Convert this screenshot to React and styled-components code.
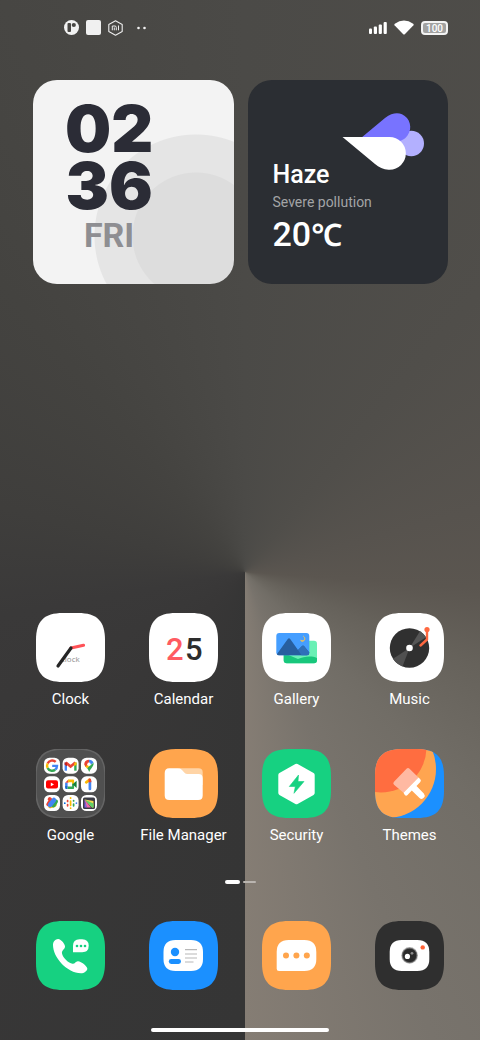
import React from "react";
import styled, { createGlobalStyle } from "styled-components";

const GlobalStyle = createGlobalStyle`
  *, *::before, *::after { box-sizing: border-box; }
  body { margin: 0; font-family: Roboto, "Noto Sans", sans-serif; color: #fff; }
`;

const Screen = styled.main`
  display: flex;
  flex-direction: column;
  min-height: 100vh;
  padding-bottom: 8px;
  background: conic-gradient(
    at 51% 55%,
    #4b4a47 0deg,
    #504e4a 40deg,
    #57534e 75deg,
    #5b5650 94deg,
    #66625b 112deg,
    #716d66 135deg,
    #78736c 158deg,
    #857d74 180deg,
    #353535 180deg,
    #383737 225deg,
    #3a3939 260deg,
    #3f3e3c 285deg,
    #444340 320deg,
    #4b4a47 360deg
  );
`;

const StatusBar = styled.header`
  display: flex;
  justify-content: space-between;
  align-items: center;
  height: 55px;
  padding: 0 32px 0 64px;
`;

const StatusGroup = styled.div`
  display: flex;
  align-items: center;
  gap: ${(p) => p.$gap}px;
`;

const Battery = styled.span`
  width: 27px;
  height: 14px;
  border: 2px solid #f4f4f4;
  border-radius: 4px;
  background: #a2a2a1;
  font-size: 10px;
  font-weight: 500;
  line-height: 11px;
  text-align: center;
`;

const Widgets = styled.section`
  display: grid;
  grid-template-columns: 1fr 1fr;
  gap: 14px;
  padding: 25px 32px 0 33px;
`;

const Widget = styled.article`
  display: flex;
  flex-direction: column;
  align-items: flex-start;
  height: 204px;
  border-radius: 24px;
`;

const ClockWidget = styled(Widget)`
  padding: 20px 32px;
  background: radial-gradient(
    circle at calc(100% - 38px) 156px,
    #dddddd 63px,
    #e5e5e5 64px,
    #e5e5e5 101px,
    #f3f3f3 102px
  );
`;

const ClockStack = styled.div`
  display: flex;
  flex-direction: column;
  align-items: center;
`;

const ClockDigits = styled.span`
  color: #2b2c36;
  font-family: Inter, sans-serif;
  font-size: 65px;
  font-weight: 900;
  line-height: 57px;
`;

const Weekday = styled.span`
  color: #8e8e92;
  font-size: 34px;
  font-weight: 700;
  line-height: 42px;
`;

const WeatherWidget = styled(Widget)`
  padding: 32px 24px 32px 25px;
  background: #2b2e33;
`;

const WeatherArt = styled.svg`
  flex: none;
  align-self: flex-end;
  margin-bottom: -10px;
`;

const Condition = styled.span`
  font-size: 25px;
  font-weight: 500;
  line-height: 30px;
`;

const AirQuality = styled.span`
  margin-top: 2px;
  color: #a3a4a6;
  font-size: 14px;
  line-height: 20px;
`;

const Temperature = styled.span`
  font-size: 34px;
  font-weight: 500;
  line-height: 44px;
`;

const Unit = styled.span`
  font-family: "Noto Sans", sans-serif;
  font-size: 31px;
  font-weight: 600;
`;

const AppGrid = styled.nav`
  display: grid;
  grid-template-columns: repeat(4, 1fr);
  row-gap: 40px;
  padding: 0 14px;
  margin-top: ${(p) => (p.$dock ? "37px" : "auto")};
`;

const AppButton = styled.button`
  display: flex;
  flex-direction: column;
  align-items: center;
  gap: 7px;
  padding: 0;
  border: 0;
  background: none;
  color: #fff;
  font: 400 15px/20px Roboto, sans-serif;
  white-space: nowrap;
  cursor: pointer;
`;

const IconArt = styled.svg`
  display: block;
  width: 69px;
  height: 69px;
`;

const PageDots = styled.div`
  display: flex;
  justify-content: center;
  align-items: center;
  gap: 3px;
  height: 4px;
  margin-top: 35px;
`;

const PageDot = styled.span`
  width: ${(p) => (p.$active ? 15 : 13)}px;
  height: ${(p) => (p.$active ? 4 : 2)}px;
  border-radius: 2px;
  background: ${(p) => (p.$active ? "#fff" : "#bab5b0")};
`;

const HomeBar = styled.div`
  width: 37%;
  height: 4px;
  margin: 38px auto 0;
  border-radius: 2px;
  background: #fff;
`;

const SQUIRCLE =
  "M0 27C0 8 8 0 27 0H42C61 0 69 8 69 27V42C69 61 61 69 42 69H27C8 69 0 61 0 42Z";

const Icon = ({ fill, children }) => (
  <IconArt viewBox="0 0 69 69" aria-hidden="true">
    <path d={SQUIRCLE} fill={fill} />
    {children}
  </IconArt>
);

const ClockIcon = () => (
  <Icon fill="#fff">
    <text x="25" y="49" fontSize="8" fontFamily="Open Sans, sans-serif" fill="#8d8d8d">clock</text>
    <path d="M35 35L47.5 32.3" stroke="#ff5257" strokeWidth="3.2" strokeLinecap="round" />
    <path d="M35 35L22 53" stroke="#252525" strokeWidth="3.2" strokeLinecap="round" />
  </Icon>
);

const CalendarIcon = () => (
  <Icon fill="#fff">
    <g fontFamily="Roboto, sans-serif" fontSize="31" fontWeight="500">
      <text x="17" y="47" fill="#ff5b61">2</text>
      <text x="36" y="47" fill="#2d2d2d">5</text>
    </g>
  </Icon>
);

const GalleryIcon = () => (
  <Icon fill="#fff">
    <rect x="21.7" y="27.7" width="33.3" height="22.6" rx="3" fill="#6af0b5" />
    <path d="M21.7 40V47.3a3 3 0 0 0 3 3H52a3 3 0 0 0 3-3V45C49 42.5 42 43.500 36 46Z" fill="#18c77c" />
    <rect x="14.300" y="20" width="33" height="22.300" rx="3" fill="#459eff" />
    <path d="M15 41L25.800 26Q27 24.600 28.200 26L36 37L40 33Q41 32 42 33L47.300 39.500V40a2.300 2.300 0 0 1-2.300 2.300H16.600Q15 42.300 15 41Z" fill="#275f9f" />
    <path d="M36 37L40 33Q41 32 42 33L47.300 39.500Q47 42.300 45 42.300H39.500Z" fill="#2f70b9" />
    <path d="M41.200 23C44.500 25.500 42 29 38.500 27C40.500 31 45.500 26 41.200 23Z" fill="#ffc24b" stroke="#ffc24b" strokeWidth=".5" />
  </Icon>
);

const MusicIcon = () => (
  <Icon fill="#fff">
    <circle cx="34.500" cy="35" r="19.700" fill="#303030" />
    <path d="M34.500 35L45 18.300A19.700 19.700 0 0 1 51 24.300Z" fill="#555" />
    <path d="M34.500 35L18 45.700A19.700 19.700 0 0 0 27.500 53.400Z" fill="#505050" />
    <circle cx="34.500" cy="35" r="3.300" fill="#fff" />
    <path d="M52 17V26.500L45.500 32.500" fill="none" stroke="#ff6840" strokeWidth="2.400" strokeLinecap="round" strokeLinejoin="round" />
    <circle cx="52" cy="16.500" r="2.600" fill="#ff6840" />
  </Icon>
);

const Tile = ({ x, y, children }) => (
  <g transform={`translate(${x} ${y})`}>
    <rect width="16" height="16" rx="5.500" fill="#fff" />
    {children}
  </g>
);

const GoogleFolderIcon = () => (
  <Icon fill="#505050">
    <path d={SQUIRCLE} fill="none" stroke="#646464" strokeWidth="1.500" />
    <Tile x={8} y={8.7}>
      <g fill="none" strokeWidth="2.400">
        <path d="M11.700 4.200A5 5 0 0 0 3.600 5.800" stroke="#ea4335" />
        <path d="M3.600 5.800A5 5 0 0 0 3.600 10.200" stroke="#fbbc05" />
        <path d="M3.600 10.200A5 5 0 0 0 11.200 12" stroke="#34a853" />
        <path d="M11.200 12A5 5 0 0 0 13 8.200H8.200" stroke="#4285f4" />
      </g>
    </Tile>
    <Tile x={26.6} y={8.7}>
      <path d="M3.200 13V5" stroke="#4285f4" strokeWidth="2.400" />
      <path d="M12.800 13V5" stroke="#34a853" strokeWidth="2.400" />
      <path d="M3.200 4.800L8 8.800L12.800 4.800" fill="none" stroke="#ea4335" strokeWidth="2.600" />
      <path d="M2 4.500V7L4.400 8.500V5Z" fill="#c5221f" />
      <path d="M14 4.500V7L11.600 8.500V5Z" fill="#fbbc04" />
    </Tile>
    <Tile x={45} y={8.7}>
      <path d="M4.600 3.400A4.800 4.800 0 0 1 8 2V6.500L4 9Z" fill="#ea4335" />
      <path d="M8 2A4.700 4.700 0 0 1 12.500 5L8 8Z" fill="#4285f4" />
      <path d="M12.500 5C13.200 8.500 10 10 8.200 14.300Q7.500 12 6 10.200Z" fill="#34a853" />
      <path d="M3.300 6.500Q3.500 8.500 6 10.800L9 7.500L6.500 5Z" fill="#fbbc04" />
      <path d="M3.300 6.500Q3.200 4.500 4.700 3.300L7.500 5.700L4.500 9Z" fill="#ea4335" />
      <circle cx="8" cy="6.600" r="1.700" fill="#fff" />
    </Tile>
    <Tile x={8} y={27.3}>
      <rect x="2" y="4" width="12" height="8.300" rx="2" fill="#f00" />
      <path d="M6.800 6.300L10 8.100L6.800 10Z" fill="#fff" />
    </Tile>
    <Tile x={26.6} y={27.3}>
      <path d="M2.500 6.500L5.800 3.300V6.500Z" fill="#ea4335" />
      <path d="M2.500 6.500H5V10H2.500Z" fill="#4285f4" />
      <path d="M2.500 9.800H5V12.800H3.500Q2.500 12.800 2.500 11.800Z" fill="#1967d2" />
      <path d="M5.500 3.300H10.500Q11.500 3.300 11.500 4.300V7L9.500 8.500V6H5.500Z" fill="#fbbc04" />
      <path d="M5 10.200H9.500V7.500H11.500V11.800Q11.500 12.800 10.500 12.800H5Z" fill="#34a853" />
      <path d="M10 8L14 4.500V11.700Z" fill="#188038" />
    </Tile>
    <Tile x={45} y={27.3}>
      <path d="M8.900 5V12.700" stroke="#4285f4" strokeWidth="2.700" strokeLinecap="round" />
      <path d="M5.200 6L8.500 3.500" stroke="#fbbc04" strokeWidth="2.700" strokeLinecap="round" />
      <path d="M7.500 2.500Q10.300 1.200 10.300 4.500V6H7.500Z" fill="#ea4335" />
    </Tile>
    <Tile x={8} y={46}>
      <path d="M5.700 4.200L9.500 8" stroke="#ea4335" strokeWidth="4" strokeLinecap="round" />
      <path d="M6 11.500L11 10" stroke="#fbbc04" strokeWidth="3.400" strokeLinecap="round" />
      <path d="M9.500 10.500L12 6.500" stroke="#34a853" strokeWidth="4" strokeLinecap="round" />
      <path d="M4 9.500L5.500 7" stroke="#ea4335" strokeWidth="3.500" strokeLinecap="round" />
      <path d="M6 10L10 5" stroke="#4285f4" strokeWidth="4.500" strokeLinecap="round" />
    </Tile>
    <Tile x={26.6} y={46}>
      <g strokeWidth="1.700" strokeLinecap="round">
        <path d="M2.200 8V8.200" stroke="#0066d9" />
        <path d="M5 5.500V6.500M5 9.500V10.800" stroke="#ea4335" />
        <path d="M8 2.800V3.200M8 6V10.300M8 13V13.200" stroke="#fbbc04" />
        <path d="M11 5.500V6M11 9V10.800" stroke="#34a853" />
        <path d="M13.800 8V8.200" stroke="#4285f4" />
      </g>
    </Tile>
    <Tile x={45} y={46}>
      <rect x="2" y="2.500" width="12" height="11.500" rx="1.500" fill="#3b3b45" />
      <path d="M3.500 4.500L12.500 6V12.500H11Z" fill="#f5d84a" />
      <path d="M3.500 4.500L12.500 8.500V12.500H11Z" fill="#60cf6a" />
      <path d="M3.500 4.500L10 12.500H5.500Z" fill="#ef6ca6" />
      <path d="M3.500 4.500L6 12.500H3.500Z" fill="#8063dd" />
    </Tile>
  </Icon>
);

const FilesIcon = () => (
  <Icon fill="#ffa54d">
    <path d="M30 19.300H49.500Q53.700 19.300 53.700 23.500V36H34Z" fill="#ffd4a6" />
    <path d="M15.700 24Q15.700 19.300 20.200 19.300H29.500Q31.500 19.300 33 21L35.500 23.800Q36.500 25 38.500 25H49.500Q53.700 25 53.700 29.300V46.500Q53.700 51 49.200 51H20.200Q15.700 51 15.700 46.500Z" fill="#fff" />
  </Icon>
);

const SecurityIcon = () => (
  <Icon fill="#16d181">
    <path d="M34.500 17L50.500 26V44L34.500 53L18.500 44V26Z" fill="#fff" stroke="#fff" strokeWidth="4.400" strokeLinejoin="round" />
    <path d="M36.500 26L27.300 37.500H33.300L32 44.300L42 32.500H36Z" fill="#16d181" stroke="#16d181" strokeWidth=".6" strokeLinejoin="round" />
  </Icon>
);

const ThemesIcon = () => (
  <Icon fill="#1b90ff">
    <clipPath id="themes-shape">
      <path d={SQUIRCLE} />
    </clipPath>
    <g clipPath="url(#themes-shape)">
      <circle cx="12" cy="20" r="49" fill="#ffa550" />
      <circle cx="6" cy="-2" r="45.500" fill="#ff6d40" />
    </g>
    <path d="M31.500 19.700Q33 18.300 34.500 19.700L43.500 28.500L28.500 43.700L19 35.800Q17.500 34.300 19 32.800Z" fill="#ffb9a2" />
    <path d="M43.500 28.500L45.300 30.300Q46.500 31.500 45.300 33L41.500 37L48.800 44.500Q50.500 46.500 49 48.500Q46.800 51 44.500 49L36.800 41.500L32.500 46Q31.200 47.500 29.800 46L28.500 43.700Z" fill="#fff" />
  </Icon>
);

const PhoneIcon = () => (
  <Icon fill="#16d181">
    <path d="M22 18C25 17.800 29.500 23.500 29 26C28.500 28.500 25.500 29.500 26 32.500C27 37 32.500 42 36.500 42.800C39 43.200 39.500 40 42 40.200C45.500 40.500 51 45 51.300 47.500C51.500 50 48 52.300 45 52.300C31 52 17 36.500 17 24C17 20.500 19.500 18.200 22 18Z" fill="#fff" />
    <path d="M37 31.300V25Q37 18.300 43.500 18.300H46.200Q52.700 18.300 52.700 24.800T46.200 31.300Z" fill="#fff" />
    <g fill="#16d181">
      <circle cx="41" cy="25" r="1.300" />
      <circle cx="45" cy="25" r="1.300" />
      <circle cx="49" cy="25" r="1.300" />
    </g>
  </Icon>
);

const ContactsIcon = () => (
  <Icon fill="#1b90ff">
    <path d="M14.500 31Q14.500 19 26.500 19H42Q54 19 54 31V38Q54 50 42 50H26.500Q14.500 50 14.500 38Z" fill="#fff" />
    <circle cx="26" cy="31" r="4.200" fill="#1b90ff" />
    <rect x="19.800" y="38" width="12.200" height="5" rx="2.400" fill="#1b90ff" />
    <path d="M36 28.700H48M36 33H48M36 37H48M36 41H44.500" stroke="#b7b7b7" strokeWidth="1.200" />
  </Icon>
);

const MessagesIcon = () => (
  <Icon fill="#ffa54d">
    <path d="M14.700 31Q14.700 19 26.700 19H42.300Q54.300 19 54.300 31V38Q54.300 50 42.300 50H17Q14.700 50 14.700 47.700Z" fill="#fff" />
    <g fill="#ffa54d">
      <circle cx="24" cy="34.500" r="3" />
      <circle cx="34.400" cy="34.500" r="3" />
      <circle cx="44.800" cy="34.500" r="3" />
    </g>
  </Icon>
);

const CameraIcon = () => (
  <Icon fill="#2f2f2f">
    <path d="M14.700 31Q14.700 19 26.700 19H42.300Q54.300 19 54.300 31V38Q54.300 50 42.300 50H26.700Q14.700 50 14.700 38Z" fill="#fff" />
    <circle cx="34.600" cy="34.400" r="8.300" fill="#b5b5b5" />
    <circle cx="34.600" cy="34.400" r="7.200" fill="#2b2b2b" stroke="#666" strokeWidth=".8" />
    <circle cx="32.400" cy="35.400" r="2.600" fill="#fff" />
    <circle cx="37" cy="32.300" r="1.400" fill="#8c8c8c" />
    <circle cx="47.700" cy="26.400" r="2.200" fill="#ff6236" />
  </Icon>
);

const apps = [
  ["Clock", ClockIcon],
  ["Calendar", CalendarIcon],
  ["Gallery", GalleryIcon],
  ["Music", MusicIcon],
  ["Google", GoogleFolderIcon],
  ["File Manager", FilesIcon],
  ["Security", SecurityIcon],
  ["Themes", ThemesIcon],
];

const dockApps = [
  ["Phone", PhoneIcon],
  ["Contacts", ContactsIcon],
  ["Messages", MessagesIcon],
  ["Camera", CameraIcon],
];

const Notifications = () => (
  <StatusGroup $gap={7}>
    <svg width="15" height="15" viewBox="0 0 15 15" aria-hidden="true">
      <circle cx="7.500" cy="7.500" r="7.500" fill="#f2f2f2" />
      <rect x="3.500" y="3" width="3.500" height="9" rx="1" fill="#484744" />
      <circle cx="9.800" cy="5" r="2.100" fill="#484744" />
    </svg>
    <svg width="15" height="15" viewBox="0 0 15 15" aria-hidden="true">
      <rect width="15" height="15" rx="2" fill="#f0f0f0" />
    </svg>
    <svg width="15" height="16" viewBox="0 0 15 16" aria-hidden="true" fill="none" stroke="#eee">
      <path d="M7.500 .8L14.200 4.400V11.600L7.500 15.200L.8 11.600V4.400Z" strokeWidth="1.100" strokeLinejoin="round" />
      <path d="M4.300 10.300V6H7Q8.300 6 8.300 7.500V10.300M6.300 7.500V10.300M10.500 5.500V10.300" />
    </svg>
    <svg width="22" height="4" viewBox="0 0 22 4" aria-hidden="true" fill="#f2f2f2">
      <circle cx="8.500" cy="2" r="1.300" />
      <circle cx="14.500" cy="2" r="1.300" />
    </svg>
  </StatusGroup>
);

const Connectivity = () => (
  <StatusGroup $gap={7}>
    <svg width="19" height="12" viewBox="0 0 19 12" aria-hidden="true" fill="#fff">
      <rect x="1" y="6.500" width="3" height="5.500" rx="1" />
      <rect x="5.800" y="4.500" width="3.200" height="7.500" rx="1" />
      <rect x="10.700" y="2.500" width="3.200" height="9.500" rx="1" />
      <rect x="15.600" y="0" width="3.200" height="12" rx="1" />
    </svg>
    <svg width="20" height="15" viewBox="0 0 20 15" aria-hidden="true">
      <path d="M.5 5.200Q0 4.500 .8 3.800Q10-2.600 19.200 3.800Q20 4.500 19.500 5.200L11 14Q10 15 9 14Z" fill="#fff" />
    </svg>
    <Battery>100</Battery>
  </StatusGroup>
);

const renderApp = (showLabel) => ([name, Art]) => (
  <AppButton key={name} type="button" aria-label={showLabel ? undefined : name}>
    <Art />
    {showLabel && <span>{name}</span>}
  </AppButton>
);

export default function App() {
  return (
    <>
      <GlobalStyle />
      <Screen>
        <StatusBar>
          <Notifications />
          <Connectivity />
        </StatusBar>
        <Widgets>
          <ClockWidget>
            <ClockStack>
              <ClockDigits>02</ClockDigits>
              <ClockDigits>36</ClockDigits>
              <Weekday>FRI</Weekday>
            </ClockStack>
          </ClockWidget>
          <WeatherWidget>
            <WeatherArt width="82" height="58" viewBox="0 0 82 58" aria-hidden="true">
              <circle cx="69.300" cy="31.500" r="12.700" fill="#b3b0ff" />
              <path d="M19 26L43 6C50 .500 56 .500 60 2.300C68 6 71 16 65.500 23.500C63 27 59 29.500 54 29.500Z" fill="#7873ff" />
              <path d="M.5 25H47.500A16.300 16.300 0 0 1 47.500 57.700C42 58 37 55.500 33 52Z" fill="#fff" />
            </WeatherArt>
            <Condition>Haze</Condition>
            <AirQuality>Severe pollution</AirQuality>
            <Temperature>20<Unit>℃</Unit></Temperature>
          </WeatherWidget>
        </Widgets>
        <AppGrid aria-label="Apps">{apps.map(renderApp(true))}</AppGrid>
        <PageDots>
          <PageDot $active />
          <PageDot />
        </PageDots>
        <AppGrid $dock aria-label="Dock">{dockApps.map(renderApp(false))}</AppGrid>
        <HomeBar />
      </Screen>
    </>
  );
}
